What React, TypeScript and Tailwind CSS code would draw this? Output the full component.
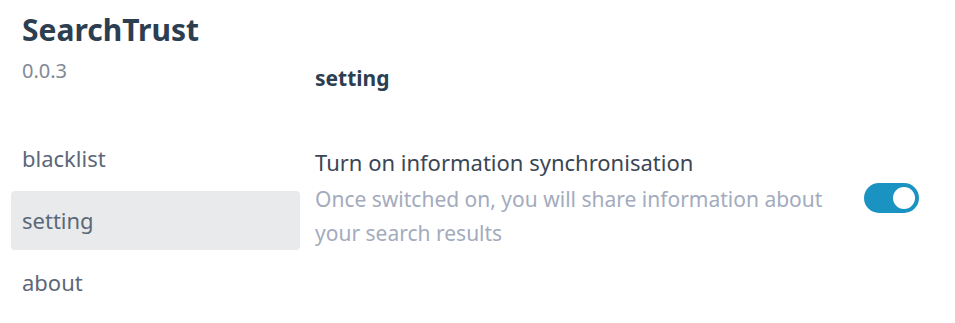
import React, { useState } from "react";

export default function App() {
  const [on, setOn] = useState(true);
  const font = { fontFamily: '"Noto Sans", "Open Sans", sans-serif' };
  return (
    <div className="flex w-[955px] h-[323px] bg-white" style={font}>
      <aside className="w-[300px] pl-[11px] pt-[12px] flex flex-col">
        <div className="pl-[11px]">
          <h1 className="text-[30px] leading-[36px] font-bold text-[#2c3e50]">SearchTrust</h1>
          <div className="mt-[9px] text-[20px] leading-[28px] text-[#7f8a96]">0.0.3</div>
        </div>
        <nav className="mt-[44px] flex flex-col gap-[3px]">
          <div className="h-[59px] px-[11px] flex items-center rounded-[4px] text-[22px] text-[#5b6878]">blacklist</div>
          <div className="h-[59px] px-[11px] flex items-center rounded-[4px] bg-[#e9eaec] text-[22px] text-[#5b6878]">setting</div>
          <div className="h-[59px] px-[11px] flex items-center rounded-[4px] text-[22px] text-[#5b6878]">about</div>
        </nav>
      </aside>
      <main className="flex-1 pl-[15px] pt-[64px]">
        <h2 className="text-[21px] leading-[28px] font-bold text-[#2c3e50]">setting</h2>
        <div className="mt-[50px] flex items-center">
          <div className="w-[540px]">
            <div className="text-[22px] leading-[40px] text-[#3a4654]">Turn on information synchronisation</div>
            <div className="text-[21px] leading-[34px] text-[#a3abbd] pr-[10px]">
              Once switched on, you will share information about your search results
            </div>
          </div>
          <button
            onClick={() => setOn(!on)}
            className="ml-[9px] mt-[4px] w-[55px] h-[30px] rounded-full bg-[#1a93c2] flex items-center justify-end px-[4px]"
          >
            <span className="block w-[22px] h-[22px] rounded-full bg-white" />
          </button>
        </div>
      </main>
    </div>
  );
}
